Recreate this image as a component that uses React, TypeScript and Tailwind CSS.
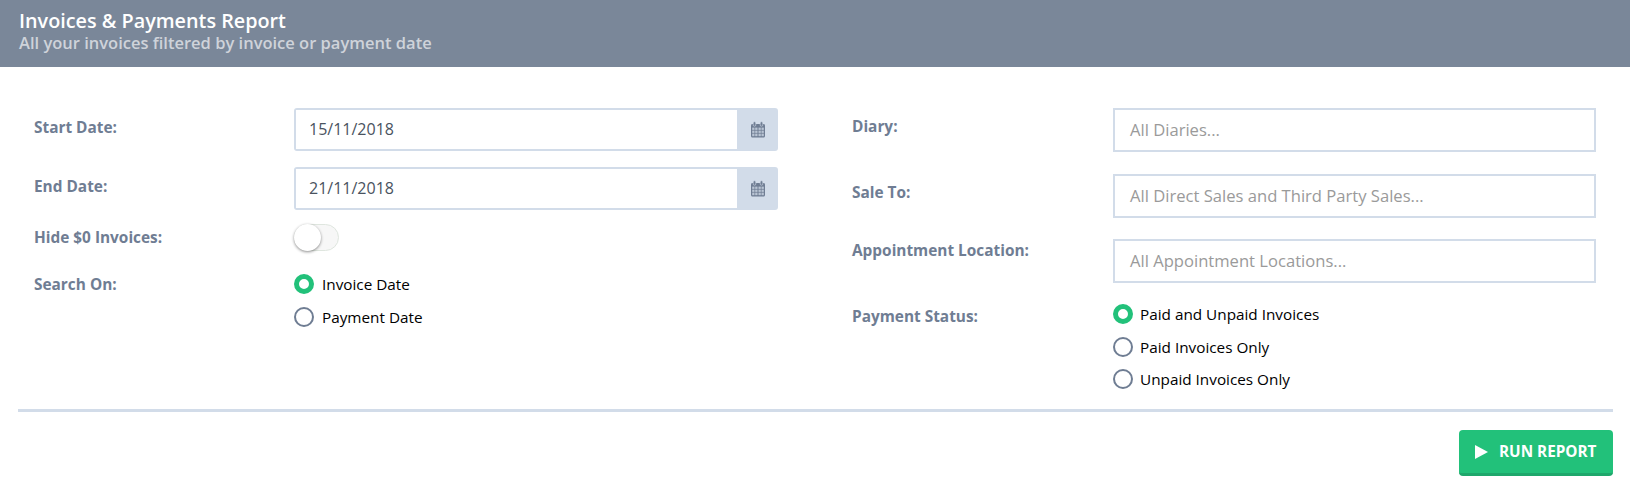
import React from 'react';

function CalendarIcon() {
  return (
    <svg width="16" height="17" viewBox="0 0 16 17" fill="none">
      <path d="M1 4.5C1 3.7 1.6 3 2.4 3H13.6C14.4 3 15 3.7 15 4.5V15C15 15.8 14.4 16.5 13.6 16.5H2.4C1.6 16.5 1 15.8 1 15V4.5Z" fill="#6f7d93" />
      <rect x="3.2" y="0.8" width="2.6" height="4.4" rx="1.2" fill="#6f7d93" stroke="#d2dce9" strokeWidth="0.6" />
      <rect x="10.2" y="0.8" width="2.6" height="4.4" rx="1.2" fill="#6f7d93" stroke="#d2dce9" strokeWidth="0.6" />
      <g fill="#d2dce9" fillOpacity="0.75">
        <rect x="2.2" y="6.6" width="2.3" height="2.3" />
        <rect x="5.2" y="6.6" width="2.3" height="2.3" />
        <rect x="8.5" y="6.6" width="2.3" height="2.3" />
        <rect x="11.5" y="6.6" width="2.3" height="2.3" />
        <rect x="2.2" y="9.6" width="2.3" height="2.3" />
        <rect x="5.2" y="9.6" width="2.3" height="2.3" />
        <rect x="8.5" y="9.6" width="2.3" height="2.3" />
        <rect x="11.5" y="9.6" width="2.3" height="2.3" />
        <rect x="2.2" y="12.6" width="2.3" height="2.6" />
        <rect x="5.2" y="12.6" width="2.3" height="2.6" />
        <rect x="8.5" y="12.6" width="2.3" height="2.6" />
        <rect x="11.5" y="12.6" width="2.3" height="2.6" />
      </g>
    </svg>
  );
}

function Label({ children, className = '' }: { children: React.ReactNode; className?: string }) {
  return <div className={`shrink-0 text-[15.4px] leading-[20px] font-bold text-[#6f7d93] ${className}`}>{children}</div>;
}

function DateField({ value }: { value: string }) {
  return (
    <div className="flex w-[484px] h-[43px] rounded-[3px] border-2 border-[#d2dce9] bg-[#d2dce9]">
      <div className="flex-1 bg-white pl-[13px] text-[16px] leading-[39px] text-[#4a5360]">{value}</div>
      <div className="w-[39px] pl-[2px] flex items-center justify-center"><CalendarIcon /></div>
    </div>
  );
}

function TextField({ placeholder }: { placeholder: string }) {
  return (
    <div className="w-[483px] h-[44px] border-2 border-[#d2dce9] bg-white pl-[15px] text-[16.6px] leading-[40px] text-[#9a9a9a]">
      {placeholder}
    </div>
  );
}

function Radio({ label, checked, right }: { label: string; checked?: boolean; right?: boolean }) {
  return (
    <div className="flex items-center h-[20px]">
      {checked ? (
        <span className="w-[20px] h-[20px] rounded-full border-[5px] border-[#22c17a] bg-white" />
      ) : (
        <span className="w-[20px] h-[20px] rounded-full border-2 border-[#6f7d93] bg-white" />
      )}
      <span className={`${right ? 'ml-[7px]' : 'ml-[8px]'} text-[15.3px] leading-[20px] text-black`}>{label}</span>
    </div>
  );
}

export default function App() {
  return (
    <div className="w-[1630px] h-[491px] bg-white overflow-hidden font-['Open_Sans',sans-serif]">
      {/* Header */}
      <div className="h-[67px] bg-[#7a8799] pl-[19px] pt-[8px]">
        <h1 className="text-[19.8px] leading-[25px] font-semibold text-white">Invoices &amp; Payments Report</h1>
        <p className="text-[16.5px] leading-[19px] font-semibold text-[#cfd3da]">All your invoices filtered by invoice or payment date</p>
      </div>

      <div className="flex pt-[41px] pl-[34px]">
        {/* Left column */}
        <div className="w-[744px]">
          <div className="flex h-[43px]">
            <Label className="w-[260px] pt-[10px]">Start Date:</Label>
            <DateField value="15/11/2018" />
          </div>
          <div className="flex h-[42px] mt-[16px]">
            <Label className="w-[260px] pt-[10px]">End Date:</Label>
            <DateField value="21/11/2018" />
          </div>
          <div className="flex items-center h-[27px] mt-[15px]">
            <Label className="w-[260px]">Hide $0 Invoices:</Label>
            <div className="relative w-[45px] h-[27px] rounded-full border border-[#dfe6df] bg-[#f7f7f7]">
              <span className="absolute -left-px -top-px w-[27px] h-[27px] rounded-full bg-white shadow-[0_1px_3px_rgba(0,0,0,0.45)]" />
            </div>
          </div>
          <div className="flex mt-[22px]">
            <Label className="w-[260px] pt-[2px]">Search On:</Label>
            <div className="flex flex-col gap-[13px] pt-[1px]">
              <Radio label="Invoice Date" checked />
              <Radio label="Payment Date" />
            </div>
          </div>
        </div>

        {/* Right column */}
        <div className="ml-[74px] w-[745px]">
          <div className="flex h-[44px]">
            <Label className="w-[261px] pt-[9px]">Diary:</Label>
            <TextField placeholder="All Diaries..." />
          </div>
          <div className="flex h-[44px] mt-[22px]">
            <Label className="w-[261px] pt-[9px]">Sale To:</Label>
            <TextField placeholder="All Direct Sales and Third Party Sales..." />
          </div>
          <div className="flex h-[43px] mt-[21px]">
            <Label className="w-[261px] pt-[2px]">Appointment Location:</Label>
            <TextField placeholder="All Appointment Locations..." />
          </div>
          <div className="flex mt-[22px]">
            <Label className="w-[261px] pt-[3px]">Payment Status:</Label>
            <div className="flex flex-col gap-[12.5px]">
              <Radio right label="Paid and Unpaid Invoices" checked />
              <Radio right label="Paid Invoices Only" />
              <Radio right label="Unpaid Invoices Only" />
            </div>
          </div>
        </div>
      </div>

      <div className="h-[3px] ml-[18px] w-[1595px] mt-[20px] bg-[#d2dce9]" />

      <div className="flex justify-end w-[1613px] mt-[18px]">
        <button className="flex items-center w-[154px] h-[46px] pl-[16px] rounded-[4px] bg-[#22c17a] border-b-[3px] border-[#1fa76b] text-white text-[15.3px] font-bold">
          <svg width="13" height="14" viewBox="0 0 13 14" className="mr-[11px]">
            <path d="M0 0L13 7L0 14Z" fill="#ffffff" />
          </svg>
          RUN REPORT
        </button>
      </div>
    </div>
  );
}
